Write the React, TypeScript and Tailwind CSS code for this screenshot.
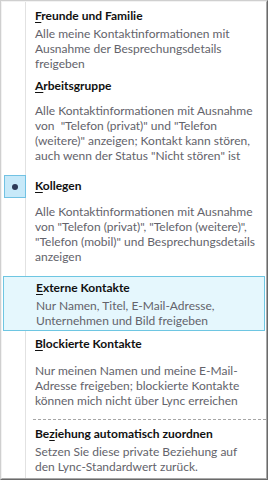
import React from "react";

const font = { fontFamily: 'Lato, "Noto Sans", sans-serif' };

function U({ children }: { children: React.ReactNode }) {
  return <span className="underline underline-offset-2">{children}</span>;
}

function Title({ children }: { children: React.ReactNode }) {
  return <div className="text-[12px] leading-[15px] font-bold text-[#111111]">{children}</div>;
}

function Desc({ lines, className = "" }: { lines: string[]; className?: string }) {
  return (
    <div className={"text-[12px] leading-[15px] text-[#63636b] " + className}>
      {lines.map((l, i) => (
        <div key={i} className="whitespace-pre">{l}</div>
      ))}
    </div>
  );
}

export default function App() {
  return (
    <div className="w-[268px] h-[480px] bg-white" style={font}>
      <div className="w-full h-full border-t border-l border-[#cfcfcf] border-r border-b border-r-[#6a6a6a] border-b-[#6a6a6a]">
        <div className="w-full h-full flex flex-col border-t border-l border-[#f2f2f2] border-r border-b border-r-[#a9a9a9] border-b-[#a9a9a9]">
          {/* Row 1 */}
          <div className="flex">
            <div className="w-[24px] shrink-0 border-r border-[#e2e2e2]" />
            <div className="flex-1 pl-[9px] pt-[6px]">
              <Title>
                <U>F</U>reunde und Familie
              </Title>
              <Desc
                className="mt-[3px]"
                lines={["Alle meine Kontaktinformationen mit", "Ausnahme der Besprechungsdetails", "freigeben"]}
              />
            </div>
          </div>
          {/* Row 2 */}
          <div className="flex">
            <div className="w-[24px] shrink-0 border-r border-[#e2e2e2]" />
            <div className="flex-1 pl-[9px] pt-[7px]">
              <Title>
                <U>A</U>rbeitsgruppe
              </Title>
              <Desc
                className="mt-[10px]"
                lines={[
                  "Alle Kontaktinformationen mit Ausnahme",
                  'von  "Telefon (privat)" und "Telefon',
                  '(weitere)" anzeigen; Kontakt kann stören,',
                  'auch wenn der Status "Nicht stören" ist',
                ]}
              />
            </div>
          </div>
          {/* Row 3 Kollegen */}
          <div className="flex">
            <div className="w-[24px] shrink-0 border-r border-[#e2e2e2] pt-[12px] pl-[2px]">
              <div className="w-[22px] h-[23px] bg-[#c7e9f9] border border-[#72c2e3] flex items-center justify-center">
                <div className="w-[6px] h-[6px] rounded-full bg-[#2c3a58]" />
              </div>
            </div>
            <div className="flex-1 pl-[9px] pt-[15px] pb-[12px]">
              <Title>
                <U>K</U>ollegen
              </Title>
              <Desc
                className="mt-[11px]"
                lines={[
                  "Alle Kontaktinformationen mit Ausnahme",
                  'von "Telefon (privat)", "Telefon (weitere)",',
                  '"Telefon (mobil)" und Besprechungsdetails',
                  "anzeigen",
                ]}
              />
            </div>
          </div>
          {/* Row 4 Externe (highlighted) */}
          <div className="flex mx-[1px] border border-[#6ec6e2] bg-[#e5f7fd]">
            <div className="w-[22px] shrink-0" />
            <div className="flex-1 pl-[10px] pt-[3px] pb-[2px]">
              <Title>
                <U>E</U>xterne Kontakte
              </Title>
              <Desc
                className="mt-[3px]"
                lines={["Nur Namen, Titel, E-Mail-Adresse,", "Unternehmen und Bild freigeben"]}
              />
            </div>
          </div>
          {/* Row 5 Blockierte */}
          <div className="flex">
            <div className="w-[24px] shrink-0 border-r border-[#e2e2e2]" />
            <div className="flex-1 pl-[9px] pt-[5px] pb-[11px]">
              <Title>
                <U>B</U>lockierte Kontakte
              </Title>
              <Desc
                className="mt-[12px]"
                lines={[
                  "Nur meinen Namen und meine E-Mail-",
                  "Adresse freigeben; blockierte Kontakte",
                  "können mich nicht über Lync erreichen",
                ]}
              />
            </div>
          </div>
          {/* Row 6 Beziehung */}
          <div className="flex flex-1">
            <div className="w-[24px] shrink-0 border-r border-[#e2e2e2]" />
            <div className="flex-1 pl-[7px]">
              <div className="border-t border-dashed border-[#a6a6a6] pl-[2px] pt-[6px]">
                <Title>
                  Be<U>z</U>iehung automatisch zuordnen
                </Title>
                <Desc
                  className="mt-[3px]"
                  lines={["Setzen Sie diese private Beziehung auf", "den Lync-Standardwert zurück."]}
                />
              </div>
            </div>
          </div>
        </div>
      </div>
    </div>
  );
}
